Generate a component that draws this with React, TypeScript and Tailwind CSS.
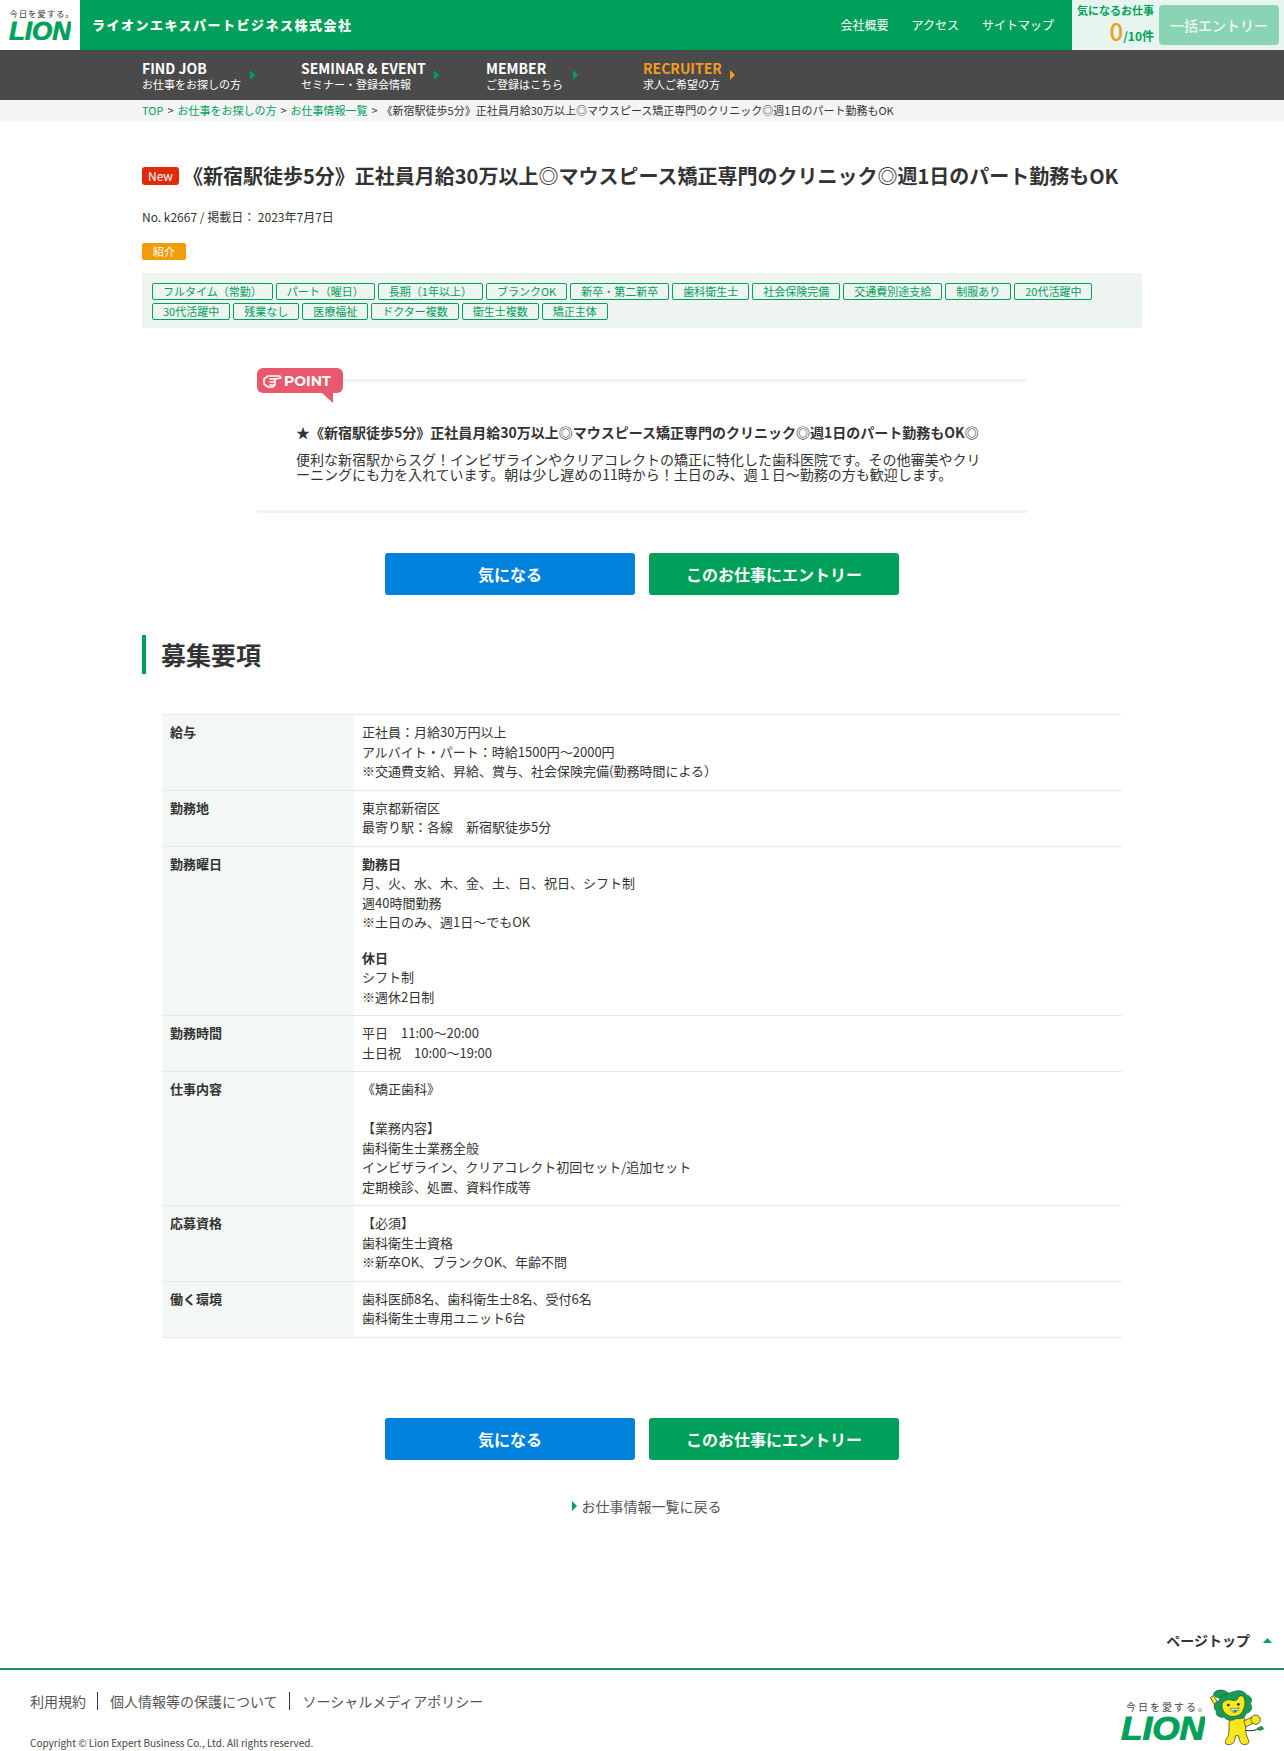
import React from "react";

const font = { fontFamily: '"Noto Sans CJK JP", "Noto Sans", sans-serif' };

function LionWord({ w, h }: { w: number; h: number }) {
  return (
    <svg width={w} height={h} viewBox="0 0 100 30" preserveAspectRatio="none" className="block">
      <text x="0" y="29.5" textLength="100" lengthAdjust="spacingAndGlyphs" fontFamily="Liberation Sans" fontStyle="italic" fontWeight="700" fontSize="40" fill="#00a05a" stroke="#00a05a" strokeWidth="1.2">LION</text>
    </svg>
  );
}

function Mascot() {
  return (
    <svg width="65" height="65" viewBox="0 0 195 195" className="block shrink-0">
      <path d="M112 132 C130 142 150 136 168 130" fill="none" stroke="#222" strokeWidth="3" />
      <path d="M154 130 L170 122 L178 132 L164 138 Z" fill="#169a55" />
      <path d="M16 38 L25 32 L46 62 L36 72 Z" fill="#f7e81c" stroke="#222" strokeWidth="2" />
      <path d="M26 30 C24 18 44 12 58 17 C70 20 76 30 70 36 C58 42 34 42 26 30 Z" fill="#169a55" stroke="#0b5d33" strokeWidth="2" />
      <path d="M74 102 C70 120 74 134 70 152 C66 160 58 168 62 176 C70 182 84 178 88 170 L92 152 L100 152 L106 172 C112 182 128 180 132 172 C130 160 122 150 122 138 C124 124 122 112 118 98 Z" fill="#f7e81c" stroke="#222" strokeWidth="2" />
      <path d="M116 108 L142 96 L150 112 L122 126 Z" fill="#f7e81c" stroke="#222" strokeWidth="2" />
      <circle cx="152" cy="104" r="14" fill="#f7e81c" stroke="#222" strokeWidth="2" />
      <path d="M86 20 C100 14 120 18 124 30 C138 32 144 46 136 56 C146 68 136 84 124 84 C122 98 104 104 94 100 C84 110 62 106 58 96 C44 100 30 90 34 78 C22 68 28 50 42 48 C44 32 70 24 86 20 Z" fill="#169a55" stroke="#0b5d33" strokeWidth="2" />
      <path d="M52 56 C56 46 70 42 82 46 C88 48 94 46 98 42 C102 28 116 30 118 42 C122 56 118 70 112 80 C104 94 80 98 68 90 C56 82 48 70 52 56 Z" fill="#f7e81c" stroke="#222" strokeWidth="1.5" />
      <circle cx="70" cy="60" r="4" fill="#222" />
      <circle cx="100" cy="58" r="4" fill="#222" />
      <path d="M76 70 C80 88 98 86 102 68 C94 72 84 72 76 70 Z" fill="#fff" stroke="#222" strokeWidth="1.5" />
      <path d="M82 76 C86 84 94 82 97 74 Z" fill="#169a55" />
    </svg>
  );
}

function Arrow({ color }: { color: string }) {
  return (
    <svg width="5" height="10" viewBox="0 0 5 10" className="block shrink-0">
      <path d="M0 0 L5 5 L0 10 Z" fill={color} />
    </svg>
  );
}

function NavItem({ en, ja, width, gap, orange }: { en: string; ja: string; width: string; gap: string; orange?: boolean }) {
  return (
    <div className={`flex items-center ${width}`}>
      <div className="flex flex-col">
        <span className={orange ? "text-[14px] leading-[18px] font-bold text-[#f39c1f]" : "text-[14px] leading-[18px] font-bold text-white"}>{en}</span>
        <span className="text-[11px] leading-[15px] text-white">{ja}</span>
      </div>
      <div className={gap}>
        <Arrow color={orange ? "#f39c1f" : "#00a05a"} />
      </div>
    </div>
  );
}

const tags1 = ["フルタイム（常勤）", "パート（曜日）", "長期（1年以上）", "ブランクOK", "新卒・第二新卒", "歯科衛生士", "社会保険完備", "交通費別途支給", "制服あり", "20代活躍中"];
const tags2 = ["30代活躍中", "残業なし", "医療福祉", "ドクター複数", "衛生士複数", "矯正主体"];

function TagRow({ tags }: { tags: string[] }) {
  return (
    <div className="flex gap-[3px]">
      {tags.map((t) => (
        <span key={t} className="border border-[#00a05a] rounded-[2px] px-[10px] h-[17px] text-[11px] leading-[15px] text-[#00a05a] whitespace-nowrap">{t}</span>
      ))}
    </div>
  );
}

function Buttons() {
  return (
    <div className="flex justify-center gap-[14px]">
      <div className="w-[250px] h-[42px] rounded-[3px] bg-[#0082dc] text-white text-[16px] font-bold flex items-center justify-center">気になる</div>
      <div className="w-[250px] h-[42px] rounded-[3px] bg-[#00a05a] text-white text-[16px] font-bold flex items-center justify-center">このお仕事にエントリー</div>
    </div>
  );
}

const rows: [string, React.ReactNode][] = [
  ["給与", <>正社員：月給30万円以上<br />アルバイト・パート：時給1500円〜2000円<br />※交通費支給、昇給、賞与、社会保険完備(勤務時間による）</>],
  ["勤務地", <>東京都新宿区<br />最寄り駅：各線　新宿駅徒歩5分</>],
  ["勤務曜日", <>
    <p><b>勤務日</b><br />月、火、水、木、金、土、日、祝日、シフト制<br />週40時間勤務<br />※土日のみ、週1日〜でもOK</p>
    <p className="mt-4"><b>休日</b><br />シフト制<br />※週休2日制</p>
  </>],
  ["勤務時間", <>平日　11:00〜20:00<br />土日祝　10:00〜19:00</>],
  ["仕事内容", <>《矯正歯科》<br /><br />【業務内容】<br />歯科衛生士業務全般<br />インビザライン、クリアコレクト初回セット/追加セット<br />定期検診、処置、資料作成等</>],
  ["応募資格", <>【必須】<br />歯科衛生士資格<br />※新卒OK、ブランクOK、年齢不問</>],
  ["働く環境", <>歯科医師8名、歯科衛生士8名、受付6名<br />歯科衛生士専用ユニット6台</>],
];

export default function App() {
  return (
    <div style={font} className="w-[1284px] h-[1751px] bg-white text-[#333] overflow-hidden">
      {/* Header */}
      <header className="flex h-[50px] bg-[#00a05a]">
        <div className="w-[80px] bg-white flex flex-col items-center pt-[8px]">
          <span className="text-[8.5px] leading-[11px] tracking-[0.8px] text-[#333] whitespace-nowrap pl-[4px]">今日を愛する。</span>
          <div className="mt-[1px]"><LionWord w={62} h={20} /></div>
        </div>
        <div className="flex-1 flex items-center justify-between pl-[12px]">
          <span className="text-[13px] font-black text-white tracking-[1.5px] whitespace-nowrap">ライオンエキスパートビジネス株式会社</span>
          <div className="flex gap-[23px] text-[12px] text-white pr-[18px]">
            <span>会社概要</span><span>アクセス</span><span>サイトマップ</span>
          </div>
        </div>
        <div className="w-[212px] bg-[#e6f5ee] flex items-center pl-[4px] pr-[5px] justify-between">
          <div className="flex flex-col items-end w-[78px]">
            <span className="text-[11px] leading-[16px] font-bold text-[#00a05a] whitespace-nowrap">気になるお仕事</span>
            <span className="text-[12px] leading-[25px] font-bold text-[#00a05a]"><span className="text-[24px] text-[#e8a020] font-medium">0</span>/10件</span>
          </div>
          <div className="w-[120px] h-[40px] rounded-[4px] bg-[#8ad3b3] text-[#eef9f3] text-[14px] font-medium flex items-center justify-center">一括エントリー</div>
        </div>
      </header>

      {/* Nav */}
      <nav className="h-[50px] bg-[#4a4a4a] flex items-center pl-[142px]">
        <NavItem en="FIND JOB" ja="お仕事をお探しの方" width="w-[159px]" gap="ml-[9px]" />
        <NavItem en="SEMINAR & EVENT" ja="セミナー・登録会情報" width="w-[185px]" gap="ml-[8px]" />
        <NavItem en="MEMBER" ja="ご登録はこちら" width="w-[157px]" gap="ml-[10px]" />
        <NavItem en="RECRUITER" ja="求人ご希望の方" width="w-[120px]" gap="ml-[8px]" orange />
      </nav>

      {/* Breadcrumb */}
      <div className="h-[21px] bg-[#f5f5f5] pl-[142px] text-[11px] leading-[21px] whitespace-nowrap">
        <span className="text-[#00a05a]">TOP</span>
        <span className="mx-[1.5px]"> &gt; </span>
        <span className="text-[#00a05a]">お仕事をお探しの方</span>
        <span className="mx-[1.5px]"> &gt; </span>
        <span className="text-[#00a05a]">お仕事情報一覧</span>
        <span className="mx-[1.5px]"> &gt; </span>
        <span>《新宿駅徒歩5分》正社員月給30万以上◎マウスピース矯正専門のクリニック◎週1日のパート勤務もOK</span>
      </div>

      <main className="w-[1000px] mx-auto">
        {/* Title */}
        <div className="mt-[39px] flex items-center h-[32px]">
          <span className="w-[37px] h-[18px] rounded-[3px] bg-[#e02a0a] text-white text-[12px] leading-[18px] text-center">New</span>
          <h1 className="ml-[4px] text-[20px] leading-[32px] font-bold whitespace-nowrap">《新宿駅徒歩5分》正社員月給30万以上◎マウスピース矯正専門のクリニック◎週1日のパート勤務もOK</h1>
        </div>
        <p className="mt-[16px] text-[12px] leading-[18px]">No. k2667 / 掲載日： 2023年7月7日</p>
        <div className="mt-[17px] w-[44px] h-[17px] rounded-[2px] bg-[#f39c0a] text-white text-[11px] leading-[17px] text-center">紹介</div>

        <div className="mt-[13px] h-[55px] bg-[#eef5f1] pl-[10px] pt-[10px] flex flex-col gap-[3px]">
          <TagRow tags={tags1} />
          <TagRow tags={tags2} />
        </div>

        {/* Point */}
        <section className="relative mt-[51px] ml-[115px] w-[770px] h-[134px] border-b-[3px] border-[#eef5f1]">
          <div className="h-[3px] bg-[#eef5f1]" />
          <div className="absolute left-0 top-[-11px] w-[86px] h-[25px] rounded-[6px] bg-[#e9596c] flex items-center pl-[6px] gap-[2px]">
            <svg width="19" height="14" viewBox="0 0 19 14" fill="none" stroke="#fff" strokeWidth="1.6" strokeLinejoin="round" strokeLinecap="round">
              <path d="M1 5 L5 2 L17 2 L18 4 L12 5 L12 11 L10 13 L5 13 L1 10 Z" />
              <path d="M7 5 L12 5 M7 8 L12 8 M7 11 L11 11" />
            </svg>
            <span className="text-[14px] font-bold text-white leading-none" style={{ fontFamily: '"Montserrat", "Open Sans", sans-serif' }}>POINT</span>
          </div>
          <div className="absolute left-[65px] top-[14px] w-0 h-0 border-l-[11px] border-l-transparent border-r-0 border-t-[10px] border-t-[#e9596c]" />
          <h3 className="absolute left-[39px] top-[41px] text-[14px] leading-[24px] font-bold whitespace-nowrap">★《新宿駅徒歩5分》正社員月給30万以上◎マウスピース矯正専門のクリニック◎週1日のパート勤務もOK◎</h3>
          <p className="absolute left-[39px] top-[73px] w-[692px] text-[14px] leading-[15px]">便利な新宿駅からスグ！インビザラインやクリアコレクトの矯正に特化した歯科医院です。その他審美やクリ<br />ーニングにも力を入れています。朝は少し遅めの11時から！土日のみ、週１日〜勤務の方も歓迎します。</p>
        </section>

        <div className="mt-[40px]"><Buttons /></div>

        {/* Heading */}
        <h2 className="mt-[40px] h-[39px] border-l-[4px] border-[#00a05a] pl-[15px] text-[25px] leading-[39px] font-bold">募集要項</h2>

        {/* Table */}
        <table className="mt-[40px] ml-[20px] w-[960px] table-fixed border-separate border-spacing-0 text-[13px] leading-[19.5px]">
          <tbody>
            {rows.map(([k, v], i) => (
              <tr key={k}>
                <th className={i === 0 ? "w-[192px] bg-[#f3f7f5] border-t border-b border-[#e8e8e8] px-[8px] pt-[7px] pb-[9px] text-left align-top font-bold" : "w-[192px] bg-[#f3f7f5] border-b border-[#e8e8e8] px-[8px] pt-[7px] pb-[9px] text-left align-top font-bold"}>{k}</th>
                <td className={i === 0 ? "border-t border-b border-[#e8e8e8] px-2 pt-[7px] pb-[9px] align-top" : "border-b border-[#e8e8e8] px-2 pt-[7px] pb-[9px] align-top"}>{v}</td>
              </tr>
            ))}
          </tbody>
        </table>

        <div className="mt-[80px]"><Buttons /></div>

        <div className="mt-[36px] pl-[9px] flex justify-center items-center gap-[5px] text-[14px] leading-[21px] text-[#555]">
          <Arrow color="#00a05a" />
          <span>お仕事情報一覧に戻る</span>
        </div>
      </main>

      {/* Page top */}
      <div className="mt-[114px] h-[20px] flex justify-end items-center pr-[12px] gap-[13px]">
        <span className="text-[14px] font-bold text-[#333]">ページトップ</span>
        <svg width="9" height="5" viewBox="0 0 9 5"><path d="M0 5 L4.5 0 L9 5 Z" fill="#00a05a" /></svg>
      </div>

      {/* Footer */}
      <footer className="mt-[17px] border-t-2 border-[#1f8a63] flex justify-between pl-[30px] pr-[14px] h-[85px]">
        <div className="pt-[22px]">
          <div className="flex items-center text-[14px] leading-[18px] text-[#555]">
            <span className="pr-[11px] border-r border-[#333]">利用規約</span>
            <span className="pl-[12px] pr-[11px] border-r border-[#333]">個人情報等の保護について</span>
            <span className="pl-[13px]">ソーシャルメディアポリシー</span>
          </div>
          <p className="mt-[25px] text-[10px] leading-[16px] text-[#444] whitespace-nowrap">Copyright © Lion Expert Business Co., Ltd. All rights reserved.</p>
        </div>
        <div className="flex items-start pt-[15px]">
          <div className="flex flex-col w-[84px] mt-[15px]">
            <span className="text-[10px] leading-[14px] tracking-[2px] text-[#444] whitespace-nowrap pl-[5px]">今日を愛する。</span>
            <div className="mt-[1px]"><LionWord w={84} h={25} /></div>
          </div>
          <Mascot />
        </div>
      </footer>
    </div>
  );
}
